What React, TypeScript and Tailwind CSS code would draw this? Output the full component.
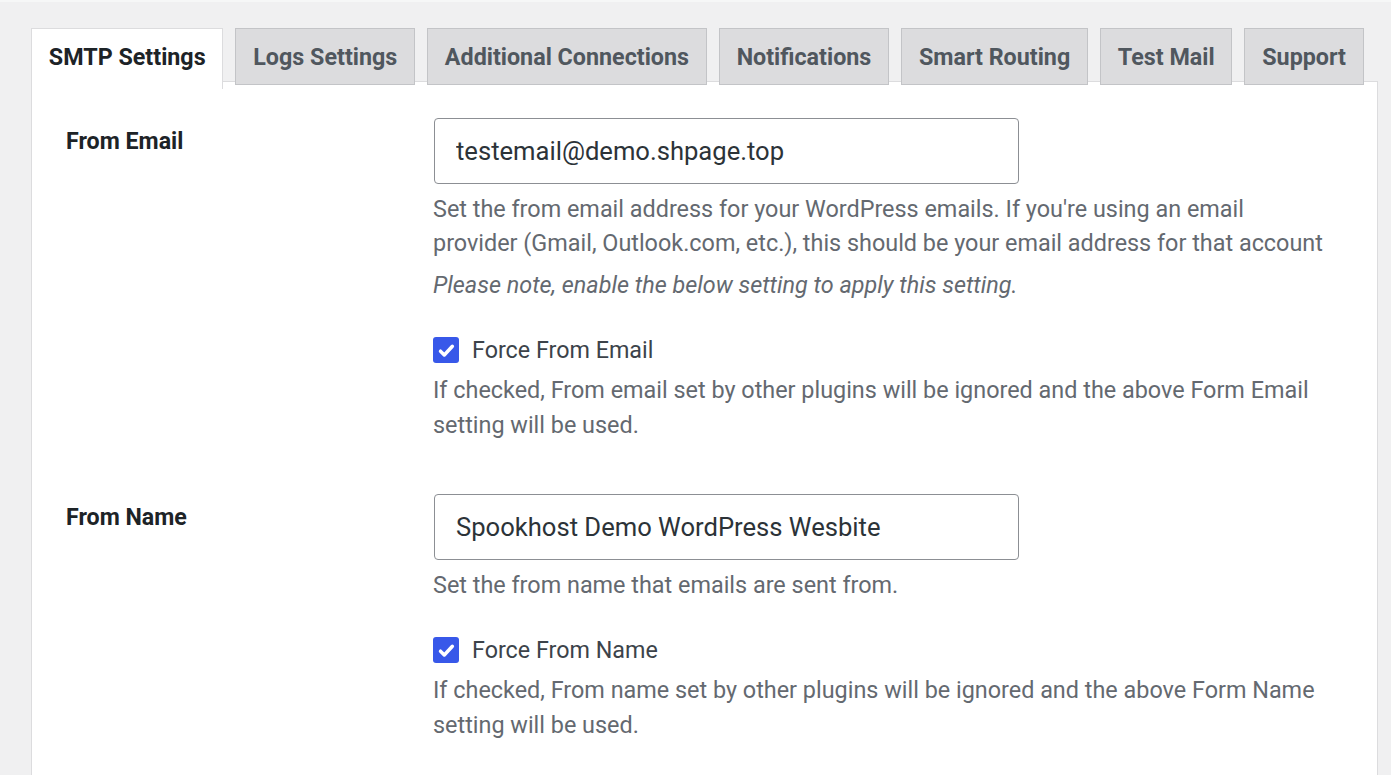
import { useState } from "react";

const tabs = [
  "SMTP Settings",
  "Logs Settings",
  "Additional Connections",
  "Notifications",
  "Smart Routing",
  "Test Mail",
  "Support",
];

export default function App() {
  const [active, setActive] = useState(0);
  const [forceEmail, setForceEmail] = useState(true);
  const [forceName, setForceName] = useState(true);

  return (
    <main className="min-h-screen bg-[#f0f0f1] border-t-2 border-[#f6f7f7] pt-[26px] pl-[31px] pr-[13px] font-['Roboto',sans-serif] overflow-hidden">
      {/* tabs */}
      <nav className="flex gap-[12px] items-start relative z-10 -mb-[8px]">
        {tabs.map((t, i) => (
          <button
            key={t}
            onClick={() => setActive(i)}
            className={
              i === active
                ? "h-[61px] px-[16.8px] pb-[2px] bg-white border border-b-0 border-[#dcdcde] text-[23.3px] font-bold text-[#1d2327] leading-none"
                : "h-[57px] px-[16.8px] pt-[2px] bg-[#dcdcde] border border-[#c3c4c7] text-[23.3px] font-bold text-[#50575e] leading-none"
            }
          >
            {t}
          </button>
        ))}
      </nav>

      {/* panel */}
      <section className="bg-white border border-[#dcdcde] h-[720px] pt-[36px] pl-[34px]">
        <SettingRow
          label="From Email"
          value="testemail@demo.shpage.top"
          help={
            <>
              <p className="mt-[8px] -ml-[1px] text-[23.4px] leading-[34px] text-[#646970] w-[895px]">
                Set the from email address for your WordPress emails. If you're using an email provider (Gmail, Outlook.com, etc.), this should be your email address for that account
              </p>
              <p className="mt-[8px] -ml-[1px] text-[23.4px] leading-[34px] text-[#646970] italic">
                Please note, enable the below setting to apply this setting.
              </p>
            </>
          }
          checkLabel="Force From Email"
          checked={forceEmail}
          onToggle={() => setForceEmail(!forceEmail)}
          checkHelp="If checked, From email set by other plugins will be ignored and the above Form Email setting will be used."
        />
        <div className="h-[51px]" />
        <SettingRow
          label="From Name"
          value="Spookhost Demo WordPress Wesbite"
          help={
            <p className="mt-[8px] -ml-[1px] text-[23.4px] leading-[34px] text-[#646970]">
              Set the from name that emails are sent from.
            </p>
          }
          checkLabel="Force From Name"
          checked={forceName}
          onToggle={() => setForceName(!forceName)}
          checkHelp="If checked, From name set by other plugins will be ignored and the above Form Name setting will be used."
        />
      </section>
    </main>
  );
}

const SettingRow = ({ label, value, help, checkLabel, checked, onToggle, checkHelp }: any) => (
  <div className="flex">
    <div className="w-[368px] shrink-0 pt-[8px] text-[23.2px] leading-[30px] font-bold text-[#1d2327]">{label}</div>
    <div className="flex-1">
      <input
        defaultValue={value}
        className="w-[585px] h-[66px] px-[21px] border border-[#8c8f94] rounded-[4px] text-[25.6px] text-[#2c3338] outline-none"
      />
      {help}
      <label className="mt-[30px] -ml-[1px] h-[36px] flex items-center gap-[13px] cursor-pointer">
        <span
          onClick={onToggle}
          className={`w-[26px] h-[26px] rounded-[3px] flex items-center justify-center ${checked ? "bg-[#3858e9]" : "bg-white border border-[#8c8f94]"}`}
        >
          {checked && (
            <svg viewBox="0 0 20 20" className="w-[23px] h-[23px]" fill="none" stroke="white" strokeWidth="3" strokeLinecap="round" strokeLinejoin="round">
              <path d="M4.8 10.6l3.3 3.3 7-7.6" />
            </svg>
          )}
        </span>
        <span className="text-[23.3px] text-[#3c434a]">{checkLabel}</span>
      </label>
      <p className="mt-[5px] -ml-[1px] text-[23.4px] leading-[35px] text-[#646970] w-[895px]">{checkHelp}</p>
    </div>
  </div>
);
